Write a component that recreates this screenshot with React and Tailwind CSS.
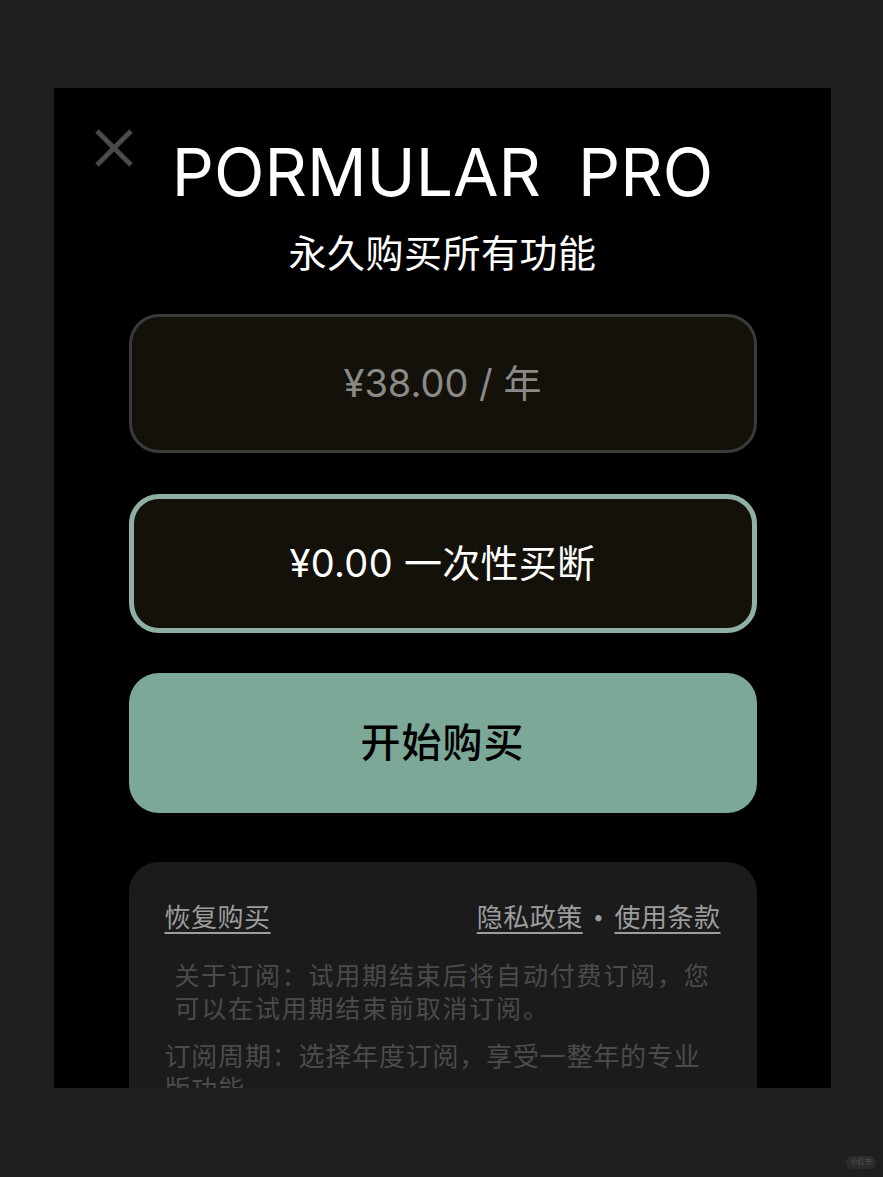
import { useState } from 'react';

const font = { fontFamily: 'Inter, "Noto Sans CJK SC", sans-serif' };

function CloseIcon() {
  return (
    <svg width="38" height="38" viewBox="0 0 38 38" className="text-[#4a4a4a]">
      <path d="M2 2 L36 36 M36 2 L2 36" stroke="currentColor" strokeWidth="5" />
    </svg>
  );
}

function PlanCard({ label, active, onClick }) {
  return (
    <button
      onClick={onClick}
      className={
        active
          ? 'shrink-0 w-[628px] h-[139px] rounded-[30px] border-[5px] border-[#8fb0a2] bg-[#13110a] flex items-center justify-center text-[38px] tracking-[0.3px] text-white'
          : 'shrink-0 w-[628px] h-[139px] rounded-[30px] border-[3px] border-[#3a3a3a] bg-[#13110a] flex items-center justify-center text-[38px] text-[#8a8a88]'
      }
    >
      {label}
    </button>
  );
}

export default function App() {
  const [plan, setPlan] = useState('once');

  return (
    <div className="w-[883px] h-[1177px] bg-[#1f1f1f] pt-[88px] pl-[54px] relative" style={font}>
      <div className="w-[777px] h-[1000px] bg-black overflow-hidden relative flex flex-col items-center">
        <div className="absolute left-[41px] top-[41px]">
          <CloseIcon />
        </div>

        <h1 className="shrink-0 mt-[44px] h-[80px] leading-[80px] text-[66px] text-white whitespace-pre">
          PORMULAR  PRO
        </h1>
        <p className="shrink-0 mt-[17px] h-[48px] leading-[48px] text-[38px] text-white tracking-[0.5px]">永久购买所有功能</p>

        <div className="shrink-0 mt-[37px]">
          <PlanCard label="¥38.00 / 年" active={plan === 'year'} onClick={() => setPlan('year')} />
        </div>
        <div className="shrink-0 mt-[41px]">
          <PlanCard label="¥0.00 一次性买断" active={plan === 'once'} onClick={() => setPlan('once')} />
        </div>

        <button className="shrink-0 mt-[40px] w-[628px] h-[140px] rounded-[30px] bg-[#7ca898] text-[40px] font-medium tracking-[1px] text-black flex items-center justify-center">
          开始购买
        </button>

        <div className="shrink-0 mt-[49px] w-[628px] h-[300px] rounded-t-[30px] bg-[#1b1b1b] px-[36px] pt-[37px]">
          <div className="flex justify-between items-center h-[36px] text-[26px] tracking-[0.5px] text-[#9d9d9d]">
            <span className="underline underline-offset-[5px] decoration-[1.5px]">恢复购买</span>
            <div className="flex items-center gap-[10px]">
              <span className="underline underline-offset-[5px] decoration-[1.5px]">隐私政策</span>
              <span className="text-[20px]">•</span>
              <span className="underline underline-offset-[5px] decoration-[1.5px]">使用条款</span>
            </div>
          </div>
          <p className="mt-[25px] pl-[10px] w-[560px] whitespace-nowrap text-[25px] leading-[33px] tracking-[1.8px] text-[#4b4b4b]">
            关于订阅：试用期结束后将自动付费订阅，您
            <br />
            可以在试用期结束前取消订阅。
          </p>
          <p className="mt-[14px] w-[556px] text-[26px] leading-[33px] tracking-[0.8px] text-[#4b4b4b]">
            订阅周期：选择年度订阅，享受一整年的专业版功能。
          </p>
        </div>
      </div>

      <div className="absolute right-[7px] bottom-[8px] w-[30px] h-[13px] rounded-full bg-[#2c2c2c] flex items-center justify-center text-[7px] text-[#5a5a5a]">
        小红书
      </div>
    </div>
  );
}
